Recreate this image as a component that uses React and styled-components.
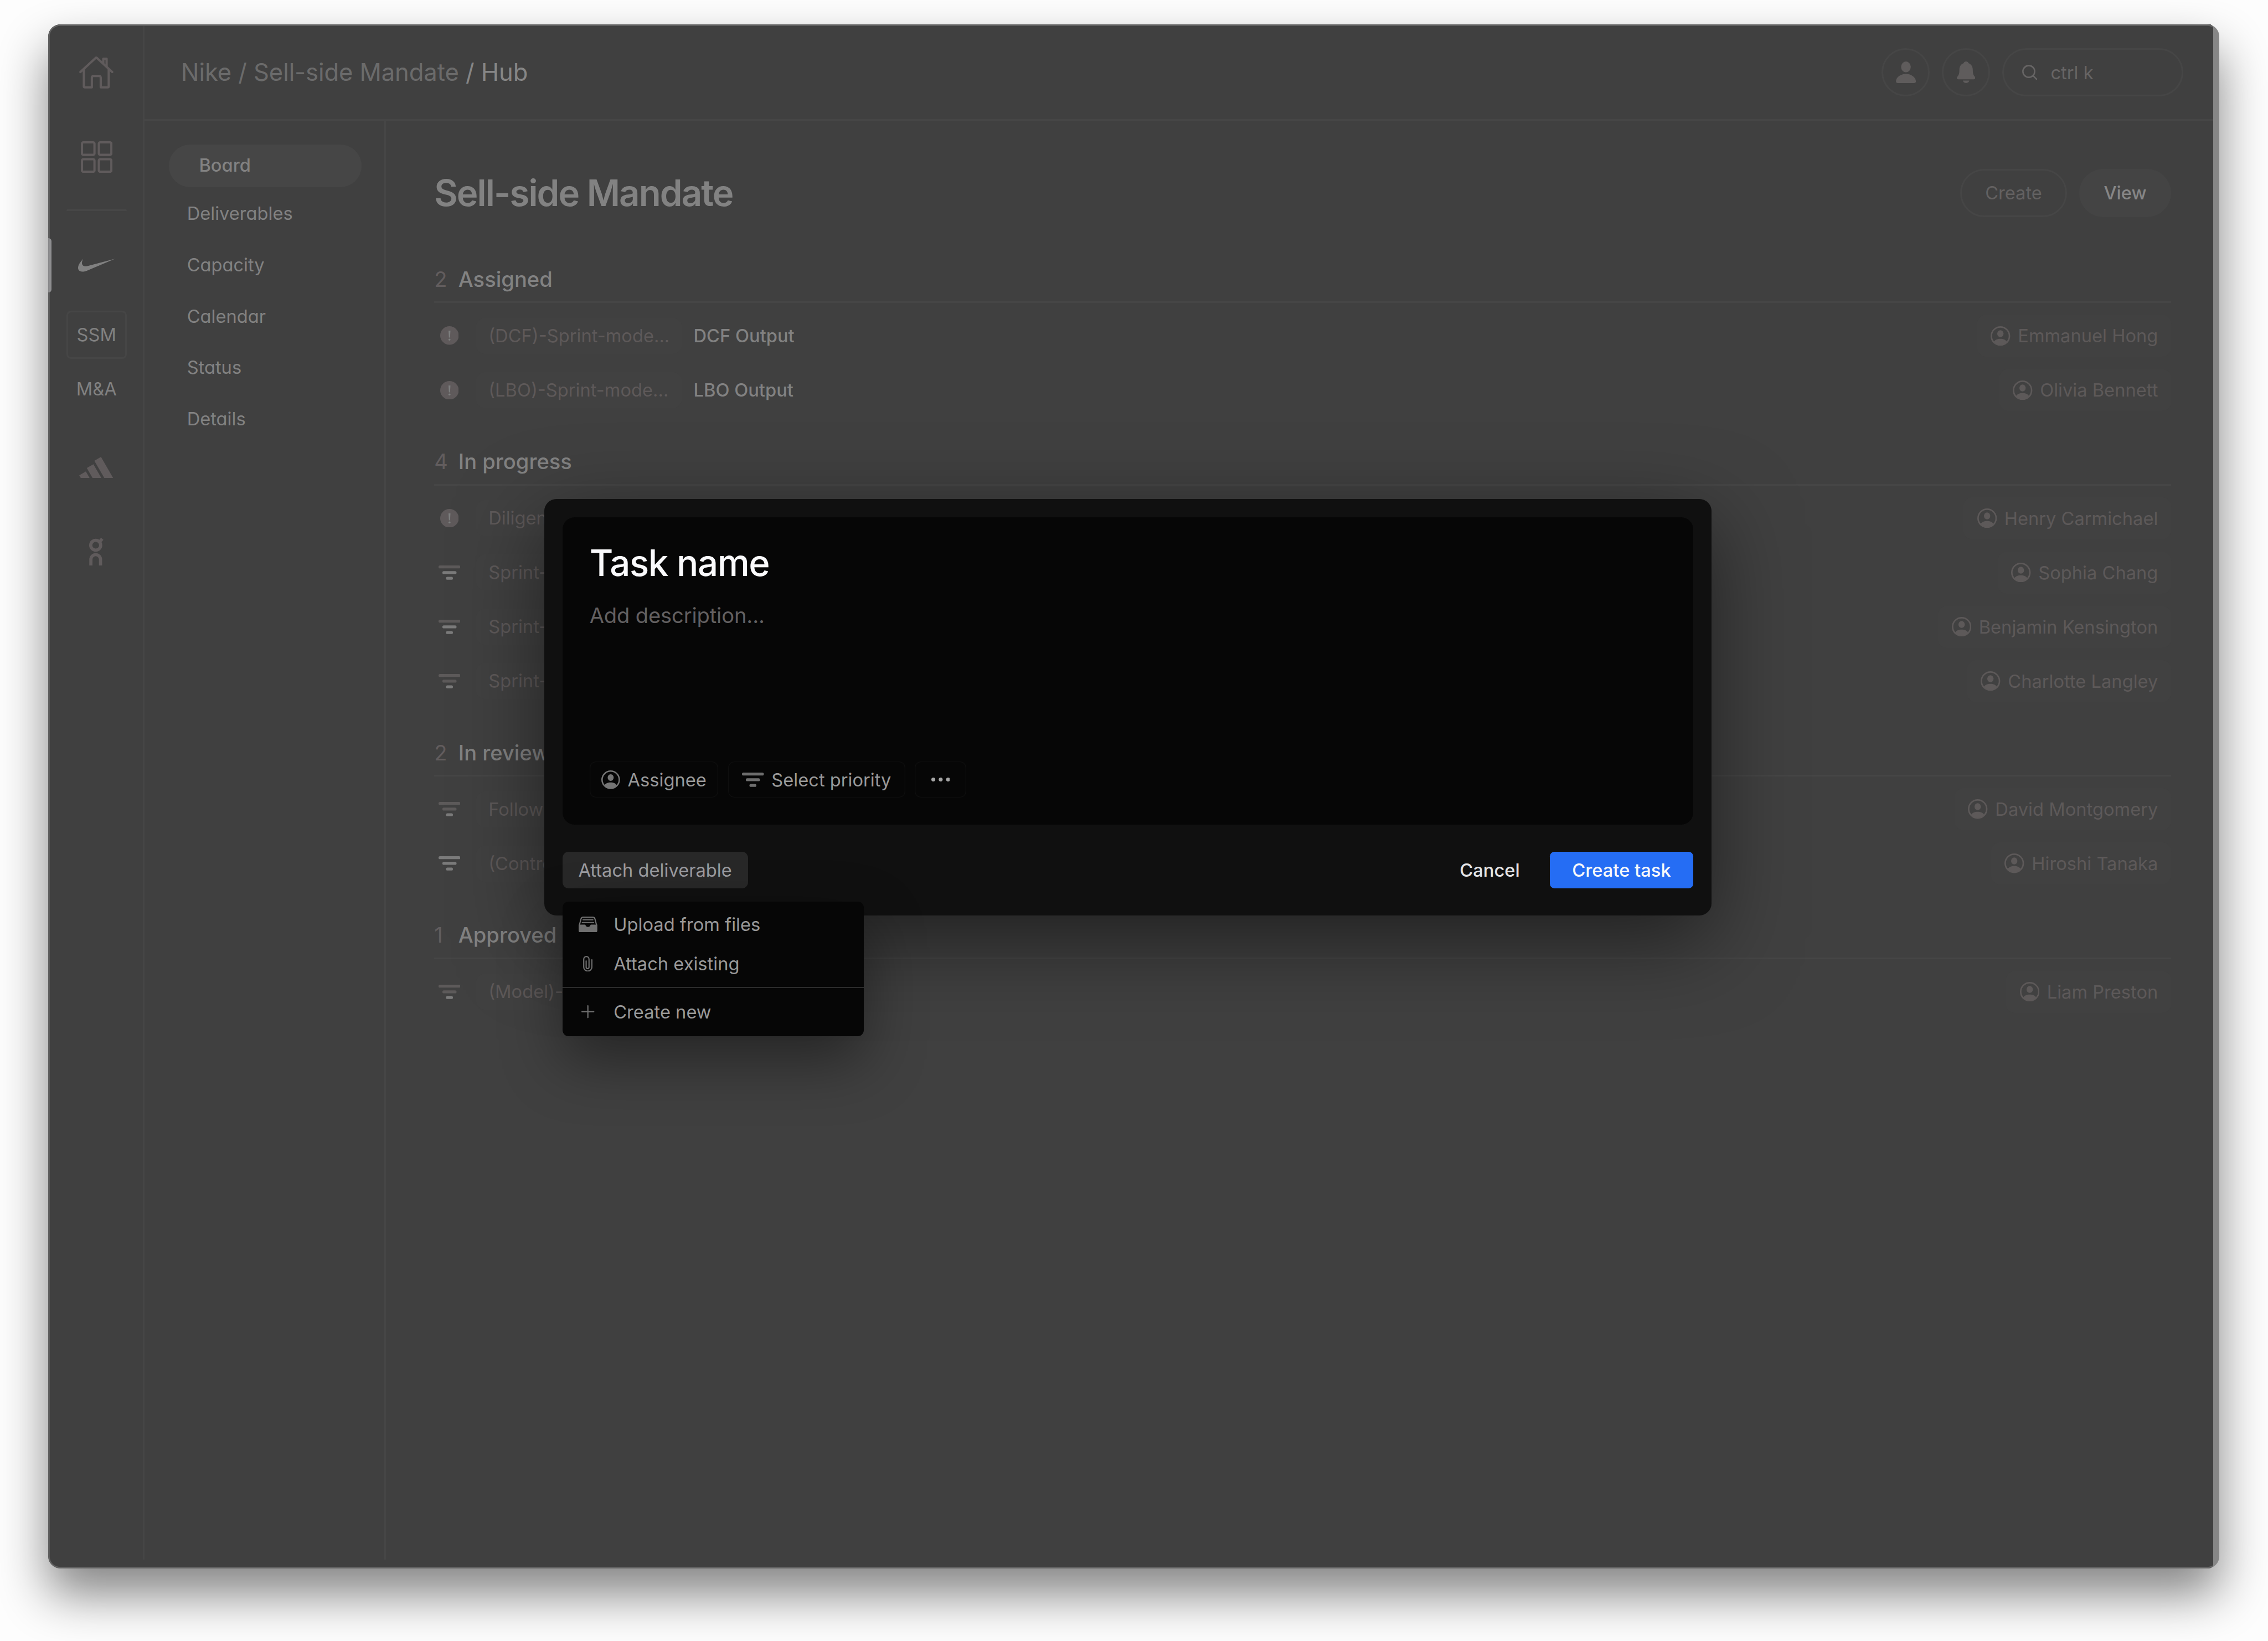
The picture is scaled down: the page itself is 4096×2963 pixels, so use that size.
import styled, { createGlobalStyle } from "styled-components"

const GlobalStyle = createGlobalStyle`
    html, body {
        margin: 0;
        background: #fdfdfd;
        overflow: hidden;
    }
    * {
        box-sizing: border-box;
    }
`

const Page = styled.div`
    zoom: 2.72296;
    width: 1504.25px;
    height: 1088px;
    padding: 16px 32px;
    background: #fdfdfd;
    font-family: Inter, "Liberation Sans", sans-serif;
    font-size: 12px;
    color: #828282;
    white-space: nowrap;
    overflow: hidden;
`

const Window = styled.div`
    position: relative;
    width: 1440px;
    height: 1024px;
    border-radius: 8px;
    background: #868686;
    box-shadow: 0 17px 32px rgba(0, 0, 0, 0.48);
`

const Shell = styled.div`
    position: relative;
    display: flex;
    width: 1436px;
    height: 1024px;
    border-radius: 8px 0 0 8px;
    background: #404040;
    overflow: hidden;
    clip-path: inset(0 0 0 0 round 8px 3px 3px 8px);

    &::after {
        content: "";
        position: absolute;
        top: 0;
        left: 0;
        width: 1440px;
        height: 1024px;
        border-radius: 8px;
        box-shadow: inset 0 0 0 1px #636363;
    }
`

const Rail = styled.div`
    display: flex;
    flex-direction: column;
    align-items: center;
    width: 64px;
    height: 1018px;
    padding-left: 1.11px;
    border-right: 1.11px solid #464646;
    color: #605b5c;
`

const RailItem = styled.div`
    position: relative;
    display: flex;
    align-items: center;
    justify-content: center;
    width: 64px;
    height: ${(props) => props.$height}px;
    color: ${(props) => (props.$active ? "#818181" : "inherit")};
`

const ActiveMark = styled.div`
    position: absolute;
    left: 0;
    top: 50%;
    width: 2px;
    height: 36px;
    margin-top: -18px;
    border-radius: 0 2px 2px 0;
    background: #8e8e90;
    z-index: 1;
`

const RailLine = styled.div`
    width: 40px;
    height: 1.3px;
    margin: 10.8px 0 17.9px;
    border-radius: 1px;
    background: #474747;
`

const RailTag = styled.div`
    display: flex;
    align-items: center;
    justify-content: center;
    width: 40px;
    height: 32px;
    padding-bottom: 0.6px;
    border-radius: 3px;
    border: 1.11px solid ${(props) => (props.$selected ? "#464646" : "transparent")};
    color: #818181;
`

const Body = styled.div`
    display: flex;
    flex-direction: column;
    flex: 1;
`

const Header = styled.header`
    display: flex;
    align-items: center;
    justify-content: space-between;
    height: 64px;
    padding: 1.11px 20px 0 24px;
    border-bottom: 1.11px solid #464646;
`

const Breadcrumb = styled.div`
    font-size: 16px;
    letter-spacing: -0.03px;
    color: #6b6b6b;

    span {
        color: #868686;
    }
`

const Tools = styled.div`
    display: flex;
    gap: 8px;
`

const RoundButton = styled.div`
    display: flex;
    align-items: center;
    justify-content: center;
    width: 32px;
    height: 32px;
    border: 1.11px solid #464646;
    border-radius: 16px;
    color: #5f5c5c;
`

const Search = styled.div`
    display: flex;
    align-items: center;
    gap: 9px;
    width: 120px;
    height: 32px;
    padding-left: 12px;
    border: 1.11px solid #464646;
    border-radius: 16px;
    color: #676565;
`

const Columns = styled.div`
    display: flex;
    flex: 1;
`

const SideNav = styled.nav`
    width: 160px;
    height: 954px;
    padding-top: 16px;
    border-right: 1.11px solid #464646;
    font-feature-settings: "cv11";
`

const NavItem = styled.div`
    display: flex;
    align-items: center;
    height: ${(props) => (props.$active ? 28 : 34)}px;
    width: 128px;
    margin: ${(props) => (props.$active ? "0 0 1px 16px" : "0 0 0 28px")};
    padding: 0 0 0.9px ${(props) => (props.$active ? 20 : 0)}px;
    border-radius: 14px;
    background: ${(props) => (props.$active ? "#464646" : "transparent")};
    font-weight: ${(props) => (props.$active ? 500 : 400)};
`

const Main = styled.main`
    flex: 1;
    padding: 32px 28px 0 32px;
`

const TitleBar = styled.div`
    display: flex;
    align-items: center;
    justify-content: space-between;
    height: 32px;
    margin-bottom: 12px;
`

const Title = styled.h1`
    margin: 0;
    font-size: 24px;
    font-weight: 600;
    letter-spacing: -0.7px;
`

const Pill = styled.div`
    display: flex;
    align-items: center;
    justify-content: center;
    width: ${(props) => props.$width}px;
    height: 32px;
    padding-bottom: 0.7px;
    border-radius: 16px;
    border: 1.11px solid ${(props) => (props.$filled ? "transparent" : "#464646")};
    background: ${(props) => (props.$filled ? "#444444" : "transparent")};
    color: ${(props) => (props.$filled ? "#868686" : "#636161")};
    font-weight: ${(props) => (props.$filled ? 500 : 400)};
`

const SectionHead = styled.div`
    display: flex;
    align-items: center;
    height: 45px;
    padding-top: 14px;
    margin-bottom: 4px;
    border-bottom: 1.11px solid #464646;
    font-size: 14px;
    font-weight: 500;
`

const Count = styled.span`
    width: 16px;
    color: #625d5e;
    font-weight: 400;
`

const Row = styled.div`
    display: flex;
    align-items: center;
    height: 36px;
    padding: 0 0 0.7px 2px;
`

const RowIcon = styled.div`
    display: flex;
    justify-content: center;
    width: 16px;
    margin-right: 10px;
`

const FileChip = styled.div`
    width: 136px;
    height: 24px;
    margin-right: 8px;
    padding: 0 8px;
    border-radius: 6px;
    background: #414141;
    color: #5e5959;
    line-height: 24px;
    overflow: hidden;
`

const RowName = styled.div`
    font-weight: 500;
`

const Owner = styled.div`
    display: flex;
    align-items: center;
    gap: 5px;
    height: 28px;
    margin-left: auto;
    padding: 0 8.7px 0 9px;
    border-radius: 6px;
    background: #414141;
    color: #5d5959;
`

const Dialog = styled.div`
    position: absolute;
    left: 329px;
    top: 315px;
    width: 774px;
    height: 276px;
    padding: 12px;
    border-radius: 8px;
    background: #101010;
    box-shadow: 0 16px 56px rgba(0, 0, 0, 0.5);
`

const Editor = styled.div`
    display: flex;
    flex-direction: column;
    height: 204px;
    padding: 16px 18px 18px;
    border-radius: 8px;
    background: #060606;
`

const TaskName = styled.div`
    color: #fafafc;
    font-size: 24px;
    font-weight: 500;
    line-height: 29px;
    letter-spacing: -0.5px;
`

const Description = styled.div`
    flex: 1;
    margin-top: 11.6px;
    color: #636061;
    font-size: 14px;
    line-height: 17px;
    letter-spacing: -0.05px;
`

const Options = styled.div`
    display: flex;
    gap: 6.5px;
`

const Option = styled.div`
    display: flex;
    align-items: center;
    justify-content: center;
    gap: 5px;
    width: ${(props) => props.$width}px;
    height: 24px;
    border-radius: 4px;
    box-shadow: inset 0 0 0 0.5px #0e0e0e;
    color: #999999;

    svg {
        color: #757575;
    }
`

const Footer = styled.div`
    display: flex;
    align-items: center;
    margin-top: 18px;
    height: 24px;
`

const Attach = styled.div`
    position: relative;
    display: flex;
    align-items: center;
    justify-content: center;
    width: 123px;
    height: 24px;
    margin-right: auto;
    border-radius: 4px;
    background: #282828;
    color: #9c9ca0;
`

const Cancel = styled.div`
    margin-right: 20px;
    color: #e4e4e6;
    font-weight: 500;
`

const Submit = styled.div`
    display: flex;
    align-items: center;
    justify-content: center;
    width: 95px;
    height: 24px;
    border-radius: 3px;
    background: #256df4;
    color: #f8f8fa;
    font-weight: 500;
`

const Menu = styled.div`
    position: absolute;
    left: 0;
    top: 33px;
    width: 200px;
    padding: 2px 0 0.2px;
    border-radius: 4px;
    background: #060606;
    box-shadow: 0 16px 40px rgba(0, 0, 0, 0.42);
    color: #999999;
`

const MenuItem = styled.div`
    display: flex;
    align-items: center;
    height: ${(props) => props.$height || 26}px;
`

const MenuIcon = styled.div`
    display: flex;
    justify-content: center;
    width: 34px;
    color: #707070;
`

const MenuLine = styled.div`
    height: 0.75px;
    margin-top: 2.3px;
    background: #2b2b2b;
`

function HomeIcon() {
    return (
        <svg width="22.7" height="21.2" viewBox="0 0 22.7 21.2" fill="none" stroke="currentColor" strokeWidth="1.5" strokeLinecap="round" strokeLinejoin="round">
            <path d="M.8 10.3 10.9 1Q11.35.6 11.8 1L21.9 10.3" />
            <path d="M3.1 8.6V19.9a.6.6 0 0 0 .6.6H8.4V14a1.1 1.1 0 0 1 1.1-1.1H13.2a1.1 1.1 0 0 1 1.1 1.1V20.5H19a.6.6 0 0 0 .6-.6V8.6" />
            <path d="M16 4.4V1.5H18.2V6.6" />
        </svg>
    )
}

function GridIcon() {
    return (
        <svg width="21" height="21" viewBox="0 0 21 21" fill="none" stroke="currentColor" strokeWidth="1.5">
            <rect x=".75" y=".75" width="8.3" height="8.3" rx=".9" />
            <rect x="11.95" y=".75" width="8.3" height="8.3" rx=".9" />
            <rect x=".75" y="11.95" width="8.3" height="8.3" rx=".9" />
            <rect x="11.95" y="11.95" width="8.3" height="8.3" rx=".9" />
        </svg>
    )
}

function SwooshLogo() {
    return (
        <svg width="24.5" height="8.7" viewBox="0 7.75 24 8.5" fill="currentColor">
            <path d="M24 7.8L6.442 15.276c-1.456.616-2.679.925-3.668.925-1.12 0-1.933-.392-2.437-1.177-.317-.504-.41-1.143-.28-1.918.13-.775.476-1.6 1.036-2.478.467-.71 1.232-1.643 2.297-2.8a6.122 6.122 0 00-.784 1.848c-.28 1.195-.028 2.072.756 2.632.373.261.886.392 1.54.392.522 0 1.11-.084 1.764-.252L24 7.8z" />
        </svg>
    )
}

function StripesLogo() {
    return (
        <svg width="22.7" height="14.2" viewBox="0 4.465 24 15.07" fill="currentColor">
            <path d="m24 19.535-8.697-15.07-4.659 2.687 7.145 12.383Zm-8.287 0L9.969 9.59 5.31 12.277l4.192 7.258ZM4.658 14.723l2.776 4.812H1.223L0 17.418Z" />
        </svg>
    )
}

function OnLogo() {
    return (
        <svg width="9.4" height="18.4" viewBox="0 0 9.4 18.4" fill="none" stroke="currentColor" strokeWidth="2.1">
            <circle cx="4.35" cy="4.95" r="3.3" />
            <path d="M6.8 2.8 8.7.7" />
            <path d="M1.15 18.4V14.4a3.2 3.2 0 0 1 6.4 0V18.4" />
        </svg>
    )
}

function PersonIcon() {
    return (
        <svg width="13.3" height="14.3" viewBox="0 0 13.3 14.3" fill="currentColor">
            <ellipse cx="6.65" cy="3.6" rx="3.2" ry="3.6" />
            <path d="M6.65 8.3c3.9 0 6.6 2.6 6.6 4.9 0 .8-.5 1.1-1.3 1.1H1.35c-.8 0-1.3-.3-1.3-1.1 0-2.3 2.7-4.9 6.6-4.9z" />
        </svg>
    )
}

function BellIcon() {
    return (
        <svg width="12.3" height="14.3" viewBox="0 0 12.3 14.3" fill="currentColor">
            <path d="M6.15 0c-.9 0-1.5.5-1.7 1.2C2.6 1.9 1.7 3.5 1.7 5.6c0 2.5-.4 3.3-1.2 4.3-.3.4-.5.7-.5 1.1 0 .5.4.8 1 .8H11.3c.6 0 1-.3 1-.8 0-.4-.2-.7-.5-1.1-.8-1-1.2-1.8-1.2-4.3 0-2.1-.9-3.7-2.75-4.4C7.65.5 7.05 0 6.15 0z" />
            <path d="M4 12.7H8.3c-.2 1-1.1 1.6-2.15 1.6S4.2 13.7 4 12.7z" />
        </svg>
    )
}

function SearchIcon() {
    return (
        <svg width="10" height="10" viewBox="0 0 10 10" fill="none" stroke="currentColor" strokeWidth=".95" strokeLinecap="round">
            <circle cx="4.4" cy="4.4" r="3.9" />
            <path d="M7.3 7.3 9.5 9.5" />
        </svg>
    )
}

function AlertIcon() {
    return (
        <svg width="12.3" height="12.3" viewBox="0 0 12.3 12.3">
            <circle cx="6.15" cy="6.15" r="6.15" fill="#5f5a5b" />
            <path d="M5.5 2.9h1.3L6.5 7.5h-.7z" fill="#7d7f7f" />
            <circle cx="6.15" cy="8.9" r=".65" fill="#7d7f7f" />
        </svg>
    )
}

const DIM = "#5d5a5a"
const LIT = "#7b7b7b"

// level 1 lights the short bar only, level 3 lights all of them
function PriorityIcon({ level, color }) {
    const tone = (n) => color || (level >= n ? LIT : DIM)
    return (
        <svg width="14.5" height="9.5" viewBox="0 0 14.5 9.5">
            <rect width="14.5" height="1.95" rx=".95" fill={tone(3)} />
            <rect x="2.55" y="3.75" width="9.4" height="1.95" rx=".95" fill={tone(2)} />
            <rect x="4.95" y="7.5" width="4.6" height="1.95" rx=".95" fill={tone(1)} />
        </svg>
    )
}

function UserIcon({ size = 13 }) {
    return (
        <svg width={size} height={size} viewBox="0 0 13 13" fill="currentColor">
            <circle cx="6.5" cy="6.5" r="6" fill="none" stroke="currentColor" strokeWidth="1" />
            <ellipse cx="6.5" cy="5" rx="2.1" ry="2.3" />
            <path d="M2.2 10.4C3 9 4.6 8.4 6.5 8.4s3.5.6 4.3 2A6 6 0 0 1 6.5 12.5a6 6 0 0 1-4.3-2.1z" />
        </svg>
    )
}

function DotsIcon() {
    return (
        <svg width="12.4" height="2.6" viewBox="0 0 12.4 2.6" fill="#a5a5a5">
            <circle cx="1.3" cy="1.3" r="1.3" />
            <circle cx="6.2" cy="1.3" r="1.3" />
            <circle cx="11.1" cy="1.3" r="1.3" />
        </svg>
    )
}

function TrayIcon() {
    return (
        <svg width="12.4" height="10.5" viewBox="0 0 12.4 10.5" fill="none" stroke="currentColor" strokeWidth=".8" strokeLinecap="round">
            <path d="M.5 5.6 1.6 1.5Q1.9.4 3 .4H9.4q1.1 0 1.4 1.1L11.9 5.6" />
            <path d="M2.9 2.1H9.5M2.4 3.9H10" strokeWidth=".7" />
            <path stroke="none" fill="currentColor" d="M0 5.3H4.1c.4 0 .5.3.6.7.2.6.8.9 1.5.9s1.3-.3 1.5-.9c.1-.4.2-.7.6-.7H12.4V9.2c0 .9-.4 1.3-1.3 1.3H1.3C.4 10.5 0 10.1 0 9.2z" />
        </svg>
    )
}

function ClipIcon() {
    return (
        <svg width="6.3" height="10.5" viewBox="0 0 6.3 10.5" fill="none" stroke="currentColor" strokeWidth=".8" strokeLinecap="round">
            <path d="M5.85 2.6V7.4a2.7 2.7 0 0 1-5.4 0V2.2a1.75 1.8 0 0 1 3.5 0V7.4a.95 1 0 0 1-1.9 0V3.3" />
        </svg>
    )
}

function PlusIcon() {
    return (
        <svg width="8.6" height="8.6" viewBox="0 0 8.6 8.6" fill="none" stroke="currentColor" strokeWidth=".8" strokeLinecap="round">
            <path d="M4.3.4V8.2M.4 4.3H8.2" />
        </svg>
    )
}

const navItems = ["Board", "Deliverables", "Capacity", "Calendar", "Status", "Details"]

const sections = [
    {
        title: "Assigned",
        rows: [
            { file: "(DCF)-Sprint-mode...", name: "DCF Output", owner: "Emmanuel Hong" },
            { file: "(LBO)-Sprint-mode...", name: "LBO Output", owner: "Olivia Bennett" },
        ],
    },
    {
        title: "In progress",
        rows: [
            { file: "Diligence", owner: "Henry Carmichael" },
            { file: "Sprint-", level: 2, owner: "Sophia Chang" },
            { file: "Sprint-", level: 2, owner: "Benjamin Kensington" },
            { file: "Sprint-", level: 1, owner: "Charlotte Langley" },
        ],
    },
    {
        title: "In review",
        rows: [
            { file: "Follow", level: 1, owner: "David Montgomery" },
            { file: "(Contro", level: 3, owner: "Hiroshi Tanaka" },
        ],
    },
    {
        title: "Approved",
        rows: [{ file: "(Model)-", level: 1, owner: "Liam Preston" }],
    },
]

function Section({ title, rows }) {
    return (
        <section>
            <SectionHead>
                <Count>{rows.length}</Count>
                {title}
            </SectionHead>
            {rows.map((row) => (
                <Row key={row.owner}>
                    <RowIcon>{row.level ? <PriorityIcon level={row.level} /> : <AlertIcon />}</RowIcon>
                    <FileChip>{row.file}</FileChip>
                    {row.name && <RowName>{row.name}</RowName>}
                    <Owner>
                        <UserIcon />
                        {row.owner}
                    </Owner>
                </Row>
            ))}
        </section>
    )
}

function TaskDialog() {
    return (
        <Dialog>
            <Editor>
                <TaskName>Task name</TaskName>
                <Description>Add description...</Description>
                <Options>
                    <Option $width={85.5}>
                        <UserIcon size={12.4} />
                        Assignee
                    </Option>
                    <Option $width={117.3}>
                        <PriorityIcon color="#6e6e6e" />
                        Select priority
                    </Option>
                    <Option $width={34}>
                        <DotsIcon />
                    </Option>
                </Options>
            </Editor>
            <Footer>
                <Attach>
                    Attach deliverable
                    <Menu>
                        <MenuItem>
                            <MenuIcon><TrayIcon /></MenuIcon>
                            Upload from files
                        </MenuItem>
                        <MenuItem>
                            <MenuIcon><ClipIcon /></MenuIcon>
                            Attach existing
                        </MenuItem>
                        <MenuLine />
                        <MenuItem $height={31.8}>
                            <MenuIcon><PlusIcon /></MenuIcon>
                            Create new
                        </MenuItem>
                    </Menu>
                </Attach>
                <Cancel>Cancel</Cancel>
                <Submit>Create task</Submit>
            </Footer>
        </Dialog>
    )
}

function App() {
    return (
        <Page>
            <GlobalStyle />
            <Window>
                <Shell>
                    <Rail>
                        <RailItem $height={64}><HomeIcon /></RailItem>
                        <RailItem $height={48}><GridIcon /></RailItem>
                        <RailLine />
                        <RailItem $height={36} $active>
                            <ActiveMark />
                            <SwooshLogo />
                        </RailItem>
                        <RailItem $height={56} $active><RailTag $selected>SSM</RailTag></RailItem>
                        <RailItem $height={16} $active><RailTag>M&A</RailTag></RailItem>
                        <RailItem $height={88}><StripesLogo /></RailItem>
                        <RailItem $height={23.6}><OnLogo /></RailItem>
                    </Rail>
                    <Body>
                        <Header>
                            <Breadcrumb>
                                Nike / Sell-side Mandate <span>/ Hub</span>
                            </Breadcrumb>
                            <Tools>
                                <RoundButton><PersonIcon /></RoundButton>
                                <RoundButton><BellIcon /></RoundButton>
                                <Search>
                                    <SearchIcon />
                                    ctrl k
                                </Search>
                            </Tools>
                        </Header>
                        <Columns>
                            <SideNav>
                                {navItems.map((item, i) => (
                                    <NavItem key={item} $active={i === 0}>{item}</NavItem>
                                ))}
                            </SideNav>
                            <Main>
                                <TitleBar>
                                    <Title>Sell-side Mandate</Title>
                                    <Tools>
                                        <Pill $width={71}>Create</Pill>
                                        <Pill $width={61} $filled>View</Pill>
                                    </Tools>
                                </TitleBar>
                                {sections.map((section) => (
                                    <Section key={section.title} {...section} />
                                ))}
                            </Main>
                        </Columns>
                    </Body>
                </Shell>
                <TaskDialog />
            </Window>
        </Page>
    )
}

export default App
